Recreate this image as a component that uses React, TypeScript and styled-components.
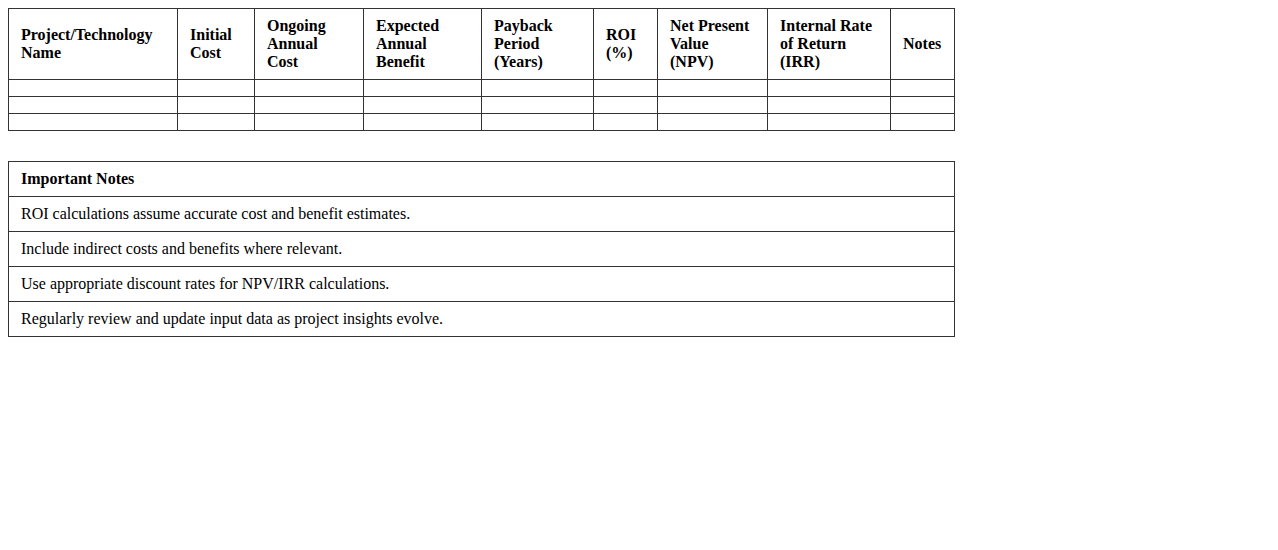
import React from "react"
import styled, { createGlobalStyle } from "styled-components"

const columns = [
  { label: "Project/Technology Name", width: 169 },
  { label: "Initial Cost", width: 77 },
  { label: "Ongoing Annual Cost", width: 109 },
  { label: "Expected Annual Benefit", width: 118 },
  { label: "Payback Period (Years)", width: 112 },
  { label: "ROI (%)", width: 64 },
  { label: "Net Present Value (NPV)", width: 110 },
  { label: "Internal Rate of Return (IRR)", width: 123 },
  { label: "Notes", width: 64 },
]

const notes = [
  "ROI calculations assume accurate cost and benefit estimates.",
  "Include indirect costs and benefits where relevant.",
  "Use appropriate discount rates for NPV/IRR calculations.",
  "Regularly review and update input data as project insights evolve.",
]

export default function App() {
  return (
    <>
      <GlobalStyle />
      <Page>
        <RoiTable>
          <colgroup>
            {columns.map((c) => (
              <col key={c.label} style={{ width: c.width }} />
            ))}
          </colgroup>
          <thead>
            <tr>
              {columns.map((c) => (
                <HeadCell key={c.label}>{c.label}</HeadCell>
              ))}
            </tr>
          </thead>
          <tbody>
            {[0, 1, 2].map((r) => (
              <tr key={r}>
                {columns.map((c) => (
                  <Cell key={c.label} />
                ))}
              </tr>
            ))}
          </tbody>
        </RoiTable>

        <NotesTable>
          <thead>
            <tr>
              <HeadCell>Important Notes</HeadCell>
            </tr>
          </thead>
          <tbody>
            {notes.map((n) => (
              <tr key={n}>
                <Cell>{n}</Cell>
              </tr>
            ))}
          </tbody>
        </NotesTable>
      </Page>
    </>
  )
}

const GlobalStyle = createGlobalStyle`
  body {
    margin: 8px;
    background: #fff;
    color: #000;
    font-family: "Liberation Serif", "Times New Roman", serif;
    font-size: 16px;
  }
`

const Page = styled.div`
  display: flex;
  flex-direction: column;
  align-items: flex-start;
`

const Table = styled.table`
  width: 947px;
  border-collapse: collapse;
  table-layout: fixed;
`

const RoiTable = styled(Table)`
  width: 946px;
  margin-bottom: 30px;
`

const NotesTable = styled(Table)``

const HeadCell = styled.th`
  border: 1px solid #333;
  padding: 8px 12px;
  text-align: left;
  vertical-align: middle;
  font-weight: bold;
  line-height: normal;
`

const Cell = styled.td`
  border: 1px solid #333;
  padding: 8px 12px;
  text-align: left;
  line-height: normal;
`
